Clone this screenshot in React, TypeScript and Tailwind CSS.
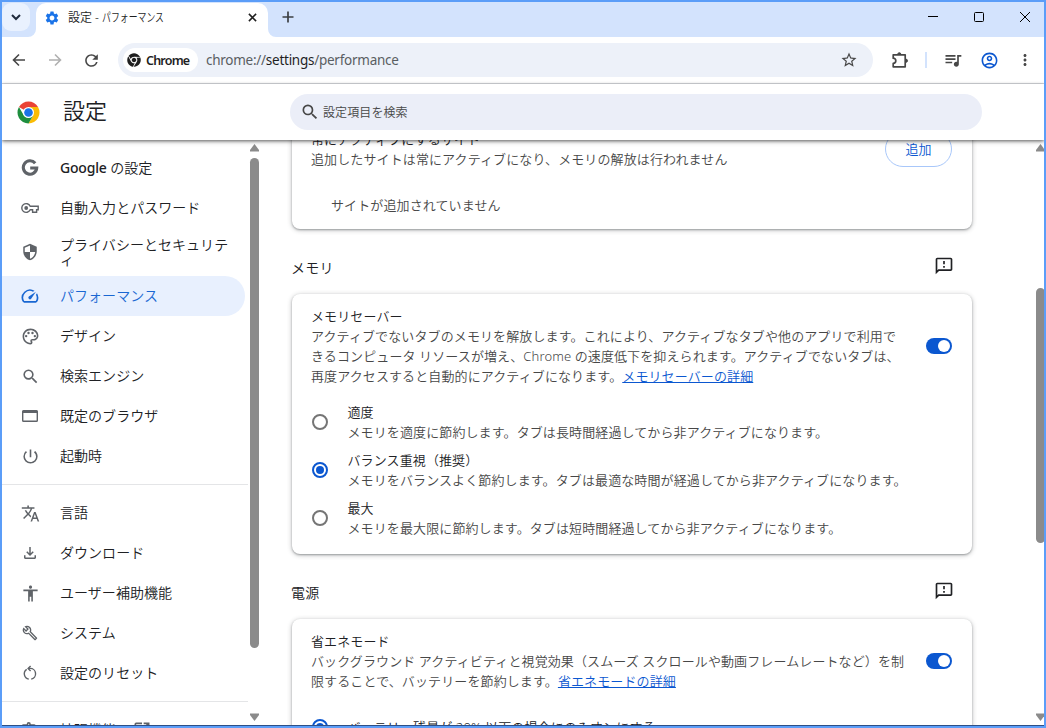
import type { ReactNode } from 'react';
import { FaChrome } from 'react-icons/fa';
import {
  MdAccessibility,
  MdMoreVert,
  MdOpenInNew,
  MdOutlineAccountCircle,
  MdOutlineBuild,
  MdOutlineExtension,
  MdOutlineFeedback,
  MdOutlineFileDownload,
  MdOutlinePalette,
  MdOutlineSpeed,
  MdPowerSettingsNew,
  MdQueueMusic,
  MdRefresh,
  MdSearch,
  MdSecurity,
  MdSettings,
  MdStarBorder,
  MdTranslate,
} from 'react-icons/md';

const GoogleIcon = () => (
  <svg viewBox="0 0 18 18" className="w-[18px] h-[18px]" fill="none" stroke="currentColor" strokeWidth="3.1">
    <path d="M14.2 4.2A6.7 6.7 0 1 0 15.7 9H9.2" />
  </svg>
);

const KeyIcon = () => (
  <svg viewBox="0 0 18 12" className="w-[18px] h-3 shrink-0" fill="none" stroke="currentColor" strokeWidth="1.4">
    <path d="M9.2 4.2A4.4 4.4 0 1 0 9.2 7.8H11.6V10.3H15.6V7.8H17.2V4.2z" />
    <circle cx="5.2" cy="6" r="1.9" fill="currentColor" stroke="none" />
  </svg>
);

const BrowserIcon = () => (
  <svg viewBox="0 0 16 12" className="w-4 h-3" fill="none" stroke="currentColor" strokeWidth="1.4">
    <rect x=".7" y=".7" width="14.6" height="10.6" rx=".8" />
    <path d="M.7 1.8h14.6" strokeWidth="2.4" />
  </svg>
);

const ResetIcon = () => (
  <svg viewBox="0 0 16 16" className="w-4 h-4" fill="none" stroke="currentColor" strokeWidth="1.4">
    <path d="M4.7 4.3A5.4 5.4 0 0 0 6.8 14.1M9.2 14.1A5.4 5.4 0 0 0 8 3.4H6.4" />
    <path d="M8.6 .9 6.1 3.4l2.5 2.5" />
  </svg>
);

const PuzzleIcon = () => (
  <svg viewBox="0 0 18 18" className="w-[18px] h-[18px]" fill="none" stroke="#474747" strokeWidth="1.7" strokeLinejoin="round">
    <path d="M2.2 3.8h12v12h-12v-3.4a2.6 2.6 0 0 0 0-5.2z" />
    <path d="M6.8 3.2a1.5 1.5 0 0 1 3 0zM15 8.2a1.5 1.5 0 0 1 0 3z" fill="#474747" strokeWidth="1" />
  </svg>
);

const ChromeLogo = () => (
  <svg viewBox="0 0 48 48" className="w-[23px] h-[23px]">
    <path d="M24 24 4.1 12.5A23 23 0 0 1 43.9 12.5z" fill="#ea4335" />
    <path d="M24 12.5h19.9A23 23 0 0 1 24 47l10-17.3z" fill="#fbbc04" />
    <path d="M4.1 12.5 14 29.8 24 35l10-5.3L24 47A23 23 0 0 1 4.1 12.5z" fill="#1e8e3e" />
    <circle cx="24" cy="24" r="11.5" fill="#fff" />
    <circle cx="24" cy="24" r="9" fill="#1a73e8" />
  </svg>
);

const menuTop = [
  { icon: <GoogleIcon />, label: <><span className="font-medium tracking-[-0.2px]">Google</span> の設定</> },
  { icon: <KeyIcon />, label: "自動入力とパスワード" },
  { icon: <MdSecurity className="w-[18px] h-[18px]" />, label: <>プライバシーとセキュリテ<br />ィ</>, tall: true },
  { icon: <MdOutlineSpeed className="w-5 h-5" />, label: "パフォーマンス", active: true },
  { icon: <MdOutlinePalette className="w-[19px] h-[19px]" />, label: "デザイン" },
  { icon: <MdSearch className="w-[19px] h-[19px]" />, label: "検索エンジン" },
  { icon: <BrowserIcon />, label: "既定のブラウザ" },
  { icon: <MdPowerSettingsNew className="w-[19px] h-[19px]" />, label: "起動時" },
];

const menuBottom = [
  { icon: <MdTranslate className="w-[19px] h-[19px]" />, label: "言語" },
  { icon: <MdOutlineFileDownload className="w-[18px] h-[18px]" />, label: "ダウンロード" },
  { icon: <MdAccessibility className="w-[19px] h-[19px]" />, label: "ユーザー補助機能" },
  { icon: <MdOutlineBuild className="w-4 h-4" />, label: "システム" },
  { icon: <ResetIcon />, label: "設定のリセット" },
];

const memoryOptions = [
  { title: "適度", desc: "メモリを適度に節約します。タブは長時間経過してから非アクティブになります。" },
  { title: "バランス重視（推奨）", desc: "メモリをバランスよく節約します。タブは最適な時間が経過してから非アクティブになります。", checked: true },
  { title: "最大", desc: "メモリを最大限に節約します。タブは短時間経過してから非アクティブになります。" },
];

type MenuItem = { icon: ReactNode; label: ReactNode; active?: boolean; tall?: boolean };

function MenuRow({ icon, label, active, tall }: MenuItem) {
  return (
    <a
      className={`flex shrink-0 items-center w-[243px] pl-[18px] text-[14px] tracking-[0.04px] whitespace-nowrap rounded-r-full ${
        tall ? "h-12 leading-[15px]" : "h-10 leading-5"
      } ${active ? "bg-[#e8f0fe] text-[#1967d2]" : "text-[#202124]"}`}
    >
      <span className={`flex w-5 mr-5 justify-center ${active ? "text-[#1967d2]" : "text-[#5f6368]"}`}>{icon}</span>
      <span className="pb-px">{label}</span>
    </a>
  );
}

function Toggle() {
  return (
    <span className="flex shrink-0 items-center justify-end w-[26px] h-4 p-[2px] rounded-full bg-[#0b57d0]">
      <span className="w-3 h-3 rounded-full bg-white" />
    </span>
  );
}

function Radio({ checked }: { checked?: boolean }) {
  return (
    <span
      className={`flex shrink-0 items-center justify-center w-4 h-4 rounded-full border-2 ${
        checked ? "border-[#0b57d0]" : "border-[#757575]"
      }`}
    >
      {checked && <span className="w-2 h-2 rounded-full bg-[#0b57d0]" />}
    </span>
  );
}

function SectionTitle({ children }: { children: ReactNode }) {
  return (
    <div className="flex h-[65px] items-center justify-between pt-2 pr-[18px] text-[14px] text-[#202124]">
      <h2 className="pt-[3px] -ml-px tracking-[0.2px]">{children}</h2>
      <MdOutlineFeedback className="w-5 h-5" />
    </div>
  );
}

function Card({ className = "", children }: { className?: string; children: ReactNode }) {
  return (
    <section
      className={`rounded-lg bg-white pl-[19px] pr-5 text-[13px] leading-5 tracking-[0.11px] text-[#474747] shadow-[0_1px_2px_rgba(60,64,67,0.4),0_1px_4px_1px_rgba(60,64,67,0.22)] ${className}`}
    >
      {children}
    </section>
  );
}

function Scrollbar({ thumb }: { thumb: string }) {
  return (
    <div className="flex flex-col items-center w-[9px] h-full pt-1 pb-1 text-[#8b8b8b]">
      <svg viewBox="0 0 9 8" className="w-[9px] h-2 shrink-0" fill="currentColor">
        <path d="M4.5 0 9 6v1.5H0V6z" />
      </svg>
      <div className={`w-[9px] shrink-0 rounded-full bg-[#8b8b8b] ${thumb}`} />
      <svg viewBox="0 0 9 8" className="w-[9px] h-2 shrink-0 mt-auto" fill="currentColor">
        <path d="M4.5 8 9 2V.5H0V2z" />
      </svg>
    </div>
  );
}

function TabStrip() {
  return (
    <div className="flex h-[35px] shrink-0 bg-[#d3e3fd]">
      <div className="w-[34px] pt-px">
        <div className="flex w-7 h-7 items-center justify-center rounded-[9px] bg-[#e9f1fe]">
          <svg viewBox="0 0 12 12" className="w-3 h-3" fill="none" stroke="#1f2a3d" strokeWidth="2">
            <path d="m2 4 4 4 4-4" />
          </svg>
        </div>
      </div>
      <svg viewBox="0 0 8 8" className="w-2 h-2 -ml-2 self-end" fill="#fff">
        <path d="M8 0a8 8 0 0 1-8 8h8z" />
      </svg>
      <div className="flex w-[232px] h-[34px] mt-px pb-[5px] pl-2 pr-[11px] items-center rounded-t-[10px] bg-white">
        <MdSettings className="w-4 h-4 text-[#1a73e8]" />
        <span className="ml-2 flex w-24 text-[12px] text-[#1f1f1f] whitespace-pre">
          設定 - <span className="origin-left scale-x-[0.74]">パフォーマンス</span>
        </span>
        <svg viewBox="0 0 10 10" className="w-[9px] h-[9px] ml-auto" stroke="#1f1f1f" strokeWidth="1.7">
          <path d="m1 1 8 8M9 1 1 9" />
        </svg>
      </div>
      <svg viewBox="0 0 8 8" className="w-2 h-2 self-end" fill="#fff">
        <path d="M0 0a8 8 0 0 0 8 8H0z" />
      </svg>
      <svg viewBox="0 0 12 12" className="w-3 h-3 mt-[9px] ml-[6px]" stroke="#3c4043" strokeWidth="1.7">
        <path d="M6 .5v11M.5 6h11" />
      </svg>
      <div className="flex ml-auto mt-[9px] mr-[14px] gap-9">
        <svg viewBox="0 0 10 12" className="w-[10px] h-3" stroke="#000">
          <path d="M0 5.5h10" />
        </svg>
        <svg viewBox="0 0 10 12" className="w-[10px] h-3" stroke="#000" fill="none">
          <rect x=".5" y="1.5" width="9" height="9" rx="1" />
        </svg>
        <svg viewBox="0 0 10 12" className="w-[10px] h-3" stroke="#000">
          <path d="m0 1 10 10M10 1 0 11" />
        </svg>
      </div>
    </div>
  );
}

function Toolbar() {
  return (
    <div className="flex h-[47px] shrink-0 items-center border-b border-[#dadce0] bg-white pl-[10px] text-[#474747]">
      <svg viewBox="0 0 14 14" className="w-[14px] h-[14px]" fill="none" stroke="#474747" strokeWidth="1.6">
        <path d="M13 7H2M7 1.5 1.5 7 7 12.5" />
      </svg>
      <svg viewBox="0 0 14 14" className="w-[14px] h-[14px] ml-[22px]" fill="none" stroke="#b0b0b0" strokeWidth="1.6">
        <path d="M1 7h11M7 1.5 12.5 7 7 12.5" />
      </svg>
      <MdRefresh className="w-[19px] h-[19px] ml-5" />
      <div className="flex w-[755px] h-[34px] ml-[17px] pl-[5px] pr-[15px] items-center rounded-full bg-[#edf1f9]">
        <div className="flex w-[75px] h-6 items-center rounded-full bg-white pl-1 gap-[5px] text-[12.5px] font-semibold tracking-[-0.8px] text-[#1f1f1f]">
          <FaChrome className="w-[14px] h-[14px]" />
          <span className="pt-[2px]">Chrome</span>
        </div>
        <span className="ml-2 pt-px text-[13.5px] font-normal tracking-[-0.26px] text-[#5a5e62]">
          chrome://<span className="text-[#1f1f1f]">settings</span>/performance
        </span>
        <MdStarBorder className="w-[18px] h-[18px] ml-auto" />
      </div>
      <span className="ml-[18px]"><PuzzleIcon /></span>
      <span className="w-[2px] h-4 ml-[16px] bg-[#d3e3fd]" />
      <MdQueueMusic className="w-5 h-5 ml-4" />
      <MdOutlineAccountCircle className="w-[19px] h-[19px] ml-[17px] text-[#0b57d0]" />
      <MdMoreVert className="w-[18px] h-[18px] ml-[17px]" />
    </div>
  );
}

export default function App() {
  return (
    <div className="flex flex-col w-[1046px] h-[728px] overflow-hidden border-2 border-[#5b9df8] bg-white font-[350] font-['Noto_Sans','Noto_Sans_CJK_JP',sans-serif]">
      <TabStrip />
      <Toolbar />

      {/* Settings header */}
      <header className="relative z-10 flex h-14 shrink-0 items-center bg-white pl-[15px] shadow-[0_1px_3px_rgba(0,0,0,0.5),0_2px_5px_rgba(0,0,0,0.2)]">
        <ChromeLogo />
        <h1 className="w-[227px] ml-[23px] pb-1 text-[22px] leading-none text-[#202124]">設定</h1>
        <div className="flex w-[692px] h-9 items-center rounded-full bg-[#ebeef8] pl-[10px] text-[#474747]">
          <MdSearch className="w-5 h-5" />
          <span className="ml-[3px] pt-px text-[12px] tracking-[0.1px]">設定項目を検索</span>
        </div>
      </header>

      <div className="flex min-h-0 flex-1 border-b border-[#2d4f86]">
        {/* Side menu */}
        <nav className="flex w-[248px] flex-col overflow-hidden pt-2">
          {menuTop.map((item, idx) => (
            <MenuRow key={idx} {...item} />
          ))}
          <div className="h-px w-[246px] shrink-0 mt-2 mb-2 bg-[#e4e5e7]" />
          {menuBottom.map((item, idx) => (
            <MenuRow key={idx} {...item} />
          ))}
          <div className="h-px w-[246px] shrink-0 mt-2 mb-2 bg-[#e4e5e7]" />
          <MenuRow
            icon={<MdOutlineExtension className="w-5 h-5" />}
            label={<span className="flex items-center gap-4">拡張機能<MdOpenInNew className="w-5 h-5 text-[#5f6368]" /></span>}
          />
        </nav>
        <Scrollbar thumb="h-[490px] mt-[6px]" />

        {/* Page content */}
        <main className="w-[777px] overflow-hidden pl-[33px]">
          <div className="w-[680px] whitespace-nowrap">
            <Card className="h-[109px] -mt-5 pt-[9px]">
              <div className="flex items-start justify-between">
                <div>
                  <h3 className="text-[#202124]">常にアクティブにするサイト</h3>
                  <p>追加したサイトは常にアクティブになり、メモリの解放は行われません</p>
                </div>
                <button className="w-[67px] h-9 mt-[2px] rounded-full border border-[#a8c7fa] text-[13px] text-[#0b57d0]">追加</button>
              </div>
              <p className="pl-5 pt-[26px]">サイトが追加されていません</p>
            </Card>

            <SectionTitle>メモリ</SectionTitle>
            <Card className="h-[260px] pt-3">
              <div className="flex items-center justify-between">
                <div>
                  <h3 className="text-[#202124]">メモリセーバー</h3>
                  <p>
                    アクティブでないタブのメモリを解放します。これにより、アクティブなタブや他のアプリで利用で<br />
                    きるコンピュータ リソースが増え、Chrome の速度低下を抑えられます。アクティブでないタブは、<br />
                    再度アクセスすると自動的にアクティブになります。<a className="text-[#0b57d0] underline">メモリセーバーの詳細</a>
                  </p>
                </div>
                <Toggle />
              </div>
              <div className="flex flex-col gap-2 pt-4 pl-px">
                {memoryOptions.map((option) => (
                  <div key={option.title} className="flex items-center gap-[19.5px]">
                    <Radio checked={option.checked} />
                    <div>
                      <h4 className="text-[#202124]">{option.title}</h4>
                      <p>{option.desc}</p>
                    </div>
                  </div>
                ))}
              </div>
            </Card>

            <SectionTitle>電源</SectionTitle>
            <Card className="h-[260px] pt-3">
              <div className="flex items-center justify-between">
                <div>
                  <h3 className="text-[#202124]">省エネモード</h3>
                  <p>
                    バックグラウンド アクティビティと視覚効果（スムーズ スクロールや動画フレームレートなど）を制<br />
                    限することで、バッテリーを節約します。<a className="text-[#0b57d0] underline">省エネモードの詳細</a>
                  </p>
                </div>
                <Toggle />
              </div>
              <div className="flex h-10 items-center gap-[19.5px] mt-4 pl-px text-[#202124]">
                <Radio checked />
                <span>バッテリー残量が 20% 以下の場合にのみオンにする</span>
              </div>
            </Card>
          </div>
        </main>
        <div className="w-2 overflow-hidden">
          <Scrollbar thumb="h-[255px] mt-[136px]" />
        </div>
      </div>
    </div>
  );
}
